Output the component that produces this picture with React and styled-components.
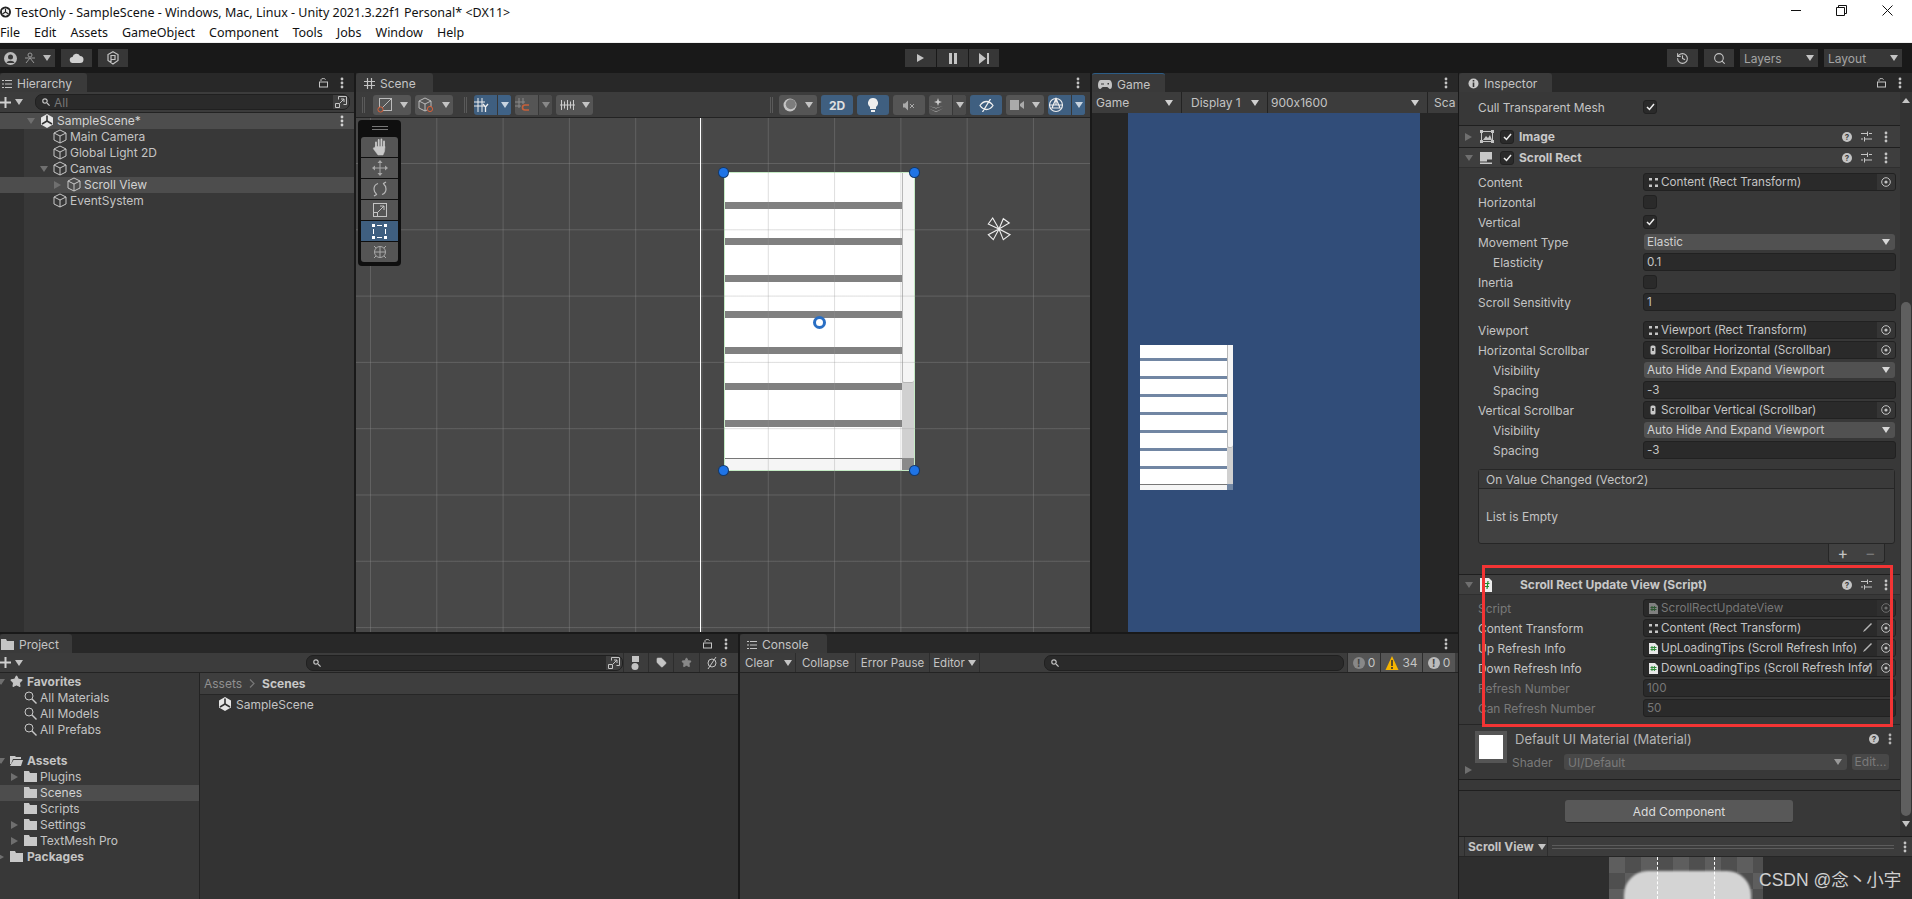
import React from "react";
import styled, { createGlobalStyle } from "styled-components";
import { History, Search, Star, Tag } from "lucide-react";

const GlobalStyle = createGlobalStyle`
  html, body {
    margin: 0;
    background: #191919;
  }
  * {
    box-sizing: border-box;
  }
`;

const StyledPage = styled.div`
  position: relative;
  width: 1912px;
  height: 899px;
  overflow: hidden;
  display: flex;
  flex-direction: column;
  background: #191919;
  color: #c4c4c4;
  font-family: Inter, "Liberation Sans", sans-serif;
  font-size: 12px;
  font-feature-settings: "calt" 0;
  white-space: nowrap;
`;

/* window chrome */
const StyledTitleBar = styled.div`
  height: 21px;
  background: #fff;
  color: #111;
  display: flex;
  align-items: center;
  font-family: "Noto Sans", sans-serif;
  font-size: 12.5px;
  padding-top: 3px;
`;

const StyledTitleIcon = styled.div`
  width: 11px;
  margin-right: 4px;
  display: flex;
  justify-content: flex-end;
  overflow: hidden;
`;

const StyledWindowButtons = styled.div`
  margin-left: auto;
  margin-top: -4px;
  display: flex;
  padding-right: 2px;
`;

const StyledWindowButton = styled.div`
  width: 45.5px;
  display: flex;
  justify-content: center;
`;

const StyledMenuBar = styled.div`
  height: 22px;
  padding-top: 1px;
  background: #fff;
  border-bottom: 1px solid #f0f0f0;
  color: #111;
  display: flex;
  align-items: center;
  gap: 14px;
  font-family: "Noto Sans", sans-serif;
  font-size: 12.5px;
`;

const StyledToolbar = styled.div`
  height: 30px;
  background: #191919;
  display: flex;
  align-items: flex-start;
  padding-top: 6px;
`;

const StyledToolbarLeft = styled.div`
  width: 905px;
  display: flex;
  gap: 6px;
`;

const StyledToolbarRight = styled.div`
  margin-left: auto;
  margin-right: 10px;
  display: flex;
  gap: 6px;
`;

const StyledPlayGroup = styled.div`
  display: flex;
  gap: 1px;
`;

const StyledTopButton = styled.div`
  width: ${props => props.$w}px;
  height: 18px;
  background: #373737;
  color: #a4a4a4;
  display: flex;
  align-items: center;
  justify-content: ${props => props.$spread ? "space-between" : "center"};
  padding: ${props => props.$spread ? "0 4px" : "0"};
`;

/* workspace */
const StyledWorkspace = styled.div`
  flex: 1;
  min-height: 0;
  display: flex;
`;

const StyledDockColumn = styled.div`
  width: 1458px;
  display: flex;
  flex-direction: column;
  gap: 2px;
`;

const StyledDockRow = styled.div`
  display: flex;
  gap: ${props => props.$gap}px;
  height: ${props => props.$h}px;
`;

const StyledPanel = styled.div`
  width: ${props => props.$w}px;
  display: flex;
  flex-direction: column;
  background: #383838;
  min-width: 0;
`;

const StyledTabStrip = styled.div`
  height: 19px;
  background: #282828;
  display: flex;
  align-items: stretch;
  flex-shrink: 0;
`;

const StyledTab = styled.div`
  width: ${props => props.$w}px;
  background: #3a3a3a;
  color: #c4c4c4;
  display: flex;
  align-items: center;
  gap: 5px;
  padding-left: ${props => props.$pad}px;
  padding-top: 2px;
  border-radius: 3px 3px 0 0;
  border-top: ${props => props.$focus ? "1px solid #2c5d87" : "none"};
`;

const StyledTabTools = styled.div`
  margin-left: auto;
  display: flex;
  align-items: center;
  gap: 12px;
  padding-right: 10px;
  color: #c4c4c4;
`;

const StyledSubBar = styled.div`
  height: ${props => props.$h}px;
  background: #3c3c3c;
  border-bottom: 1px solid #232323;
  display: flex;
  align-items: ${props => props.$top ? "flex-start" : "center"};
  padding-top: ${props => props.$top ? "3px" : "0"};
  flex-shrink: 0;
`;

const StyledSearchField = styled.div`
  width: ${props => props.$w}px;
  margin-left: ${props => props.$ml}px;
  height: 16px;
  background: #2a2a2a;
  border: 1px solid #202020;
  border-radius: 7px;
  display: flex;
  align-items: center;
  padding-left: 6px;
  gap: 4px;
  color: #777;
  font-size: 12px;
  overflow: hidden;
`;

const StyledSearchEnd = styled.div`
  margin-left: auto;
  width: 16px;
  height: 100%;
  background: #3e3e3e;
  color: #c4c4c4;
  display: flex;
  align-items: center;
  justify-content: center;
`;

const StyledAddGroup = styled.div`
  display: flex;
  align-items: center;
  gap: 4px;
  color: #d0d0d0;
`;

const StyledTreeList = styled.div`
  flex: 1;
  padding-top: ${props => props.$pt}px;
  background: ${props => props.$gutter ?
    "linear-gradient(90deg, #303030 24px, #383838 24px)" :
    "#383838"};
`;

const StyledTreeRow = styled.div`
  height: 16px;
  padding-bottom: 1px;
  display: flex;
  align-items: center;
  background: ${props => props.$selected ? "#4d4d4d" : "transparent"};
  color: ${props => props.$selected ? "#d2d2d2" : "#c4c4c4"};
  font-weight: ${props => props.$bold ? 700 : 400};
`;

const StyledTreeIndent = styled.div`
  margin-left: ${props => props.$indent}px;
  width: 13px;
  display: flex;
  flex-shrink: 0;
`;

const StyledTreeIcon = styled.div`
  width: ${props => props.$w || 17}px;
  display: flex;
  flex-shrink: 0;
  color: #c8c8c8;
`;

const StyledSceneHeaderDots = styled.div`
  margin-left: auto;
  padding-right: 10px;
  display: flex;
`;

const StyledCaret = styled.span`
  display: block;
  flex-shrink: 0;
  width: 0;
  height: 0;
  border-style: solid;
  ${props => props.$dir === "right" ? `
    border-width: 4.5px 0 4.5px 7px;
    border-color: transparent transparent transparent ${props.$color || "#6f6f6f"};
  ` : `
    border-width: 6px 4px 0 4px;
    border-color: ${props.$color || "#6f6f6f"} transparent transparent transparent;
  `}
`;

/* scene */
const StyledSceneTools = styled.div`
  display: flex;
  align-items: center;
  width: 100%;
  padding-left: 6px;
`;

const StyledGrip = styled.div`
  width: 3px;
  height: 16px;
  border-left: 1px solid #5a5a5a;
  border-right: 1px solid #5a5a5a;
  margin: 0 ${props => props.$mr}px 0 ${props => props.$ml || 0}px;
`;

const StyledToolButton = styled.div`
  width: ${props => props.$w}px;
  margin-right: ${props => props.$mr === undefined ? 4 : props.$mr}px;
  height: 20px;
  border-radius: 3px;
  background: ${props => props.$on ? "#3f5f80" : "#555"};
  color: #e0e0e0;
  font-weight: 700;
  display: flex;
  align-items: center;
  justify-content: space-around;
  overflow: hidden;
  flex-shrink: 0;
`;

const StyledSplit = styled.div`
  align-self: stretch;
  width: ${props => props.$w}px;
  margin-left: auto;
  border-left: 1px solid #383838;
  background: ${props => props.$on ? "#3f6286" : "#4c4c4c"};
  display: flex;
  align-items: center;
  justify-content: center;
`;

const StyledSceneView = styled.div`
  position: relative;
  flex: 1;
  background: #484848;
  overflow: hidden;
`;

const StyledSceneGrid = styled.div`
  position: absolute;
  inset: 0;
  background-image:
    linear-gradient(to right, rgba(150, 150, 150, 0.32) 1px, transparent 1px),
    linear-gradient(to bottom, rgba(150, 150, 150, 0.32) 1px, transparent 1px);
  background-size: 66.3px 66.3px;
  background-position: 14px 45px;
`;

const StyledAxisLine = styled.div`
  position: absolute;
  left: 344px;
  top: 0;
  bottom: 0;
  width: 1px;
  background: #fff;
`;

const StyledRectFrame = styled.div`
  position: absolute;
  left: 368px;
  top: 54px;
  width: 191px;
  height: 299px;
  border: 1px solid #c4eac4;
`;

const StyledMockList = styled.div`
  width: ${props => props.$w ? `${props.$w}px` : "100%"};
  height: ${props => props.$h ? `${props.$h}px` : "100%"};
  margin: ${props => props.$margin || "0"};
  display: grid;
  grid-template-columns: 1fr ${props => props.$bar}px;
  grid-template-rows: 1fr ${props => props.$bar}px;
  background: #fff;
`;

const StyledMockRows = styled.div`
  display: flex;
  flex-direction: column;
  gap: ${props => props.$gap}px;
  padding-top: ${props => props.$pad}px;
  overflow: hidden;
`;

const StyledMockRow = styled.div`
  height: ${props => props.$h}px;
  flex-shrink: 0;
  background: ${props => props.$color};
`;

const StyledMockVertical = styled.div`
  display: flex;
  flex-direction: column;
  background: #d0d0d0;
`;

const StyledMockHandle = styled.div`
  flex: 0 0 ${props => props.$h}px;
  background: #f5f5f5;
  border-radius: 0 0 2px 2px;
  box-shadow: inset 1px 0 0 #b8b8b8, inset 0 -1px 0 #b8b8b8;
`;

const StyledMockHorizontal = styled.div`
  background: #f5f5f5;
  border-top: 1px solid #777;
`;

const StyledMockCorner = styled.div`
  background: ${props => props.$color};
`;

const StyledHandle = styled.div`
  position: absolute;
  left: ${props => props.$x}px;
  top: ${props => props.$y}px;
  width: 9px;
  height: 9px;
  border-radius: 50%;
  background: #1f74e6;
  box-shadow: 0 0 0 1px #123a6e;
`;

const StyledPivot = styled.div`
  position: absolute;
  left: 457px;
  top: 198px;
  width: 13px;
  height: 13px;
  border-radius: 50%;
  background: #fff;
  border: 3.5px solid #2a6fc4;
`;

const StyledGizmoMark = styled.div`
  position: absolute;
  left: 630px;
  top: 98px;
  display: flex;
`;

const StyledToolOverlay = styled.div`
  position: absolute;
  left: 2px;
  top: 2px;
  width: 43px;
  height: 146px;
  background: #0f0f0f;
  border-radius: 4px;
  padding: 17px 3px 0;
  display: flex;
  flex-direction: column;
  gap: 1px;
`;

const StyledOverlayGrip = styled.div`
  position: absolute;
  left: 14px;
  top: 6px;
  width: 16px;
  height: 4px;
  border-top: 1px solid #777;
  border-bottom: 1px solid #777;
`;

const StyledOverlayTool = styled.div`
  height: 20px;
  background: ${props => props.$on ? "#3f5f80" : "#555"};
  color: #c8c8c8;
  display: flex;
  align-items: center;
  justify-content: center;
  border-radius: ${props => props.$edge === "top" ? "3px 3px 0 0" : props.$edge === "bottom" ? "0 0 3px 3px" : "0"};
`;

/* game */
const StyledGameTools = styled.div`
  height: 21px;
  display: flex;
  gap: 1px;
  background: #232323;
  flex-shrink: 0;
`;

const StyledGameDropdown = styled.div`
  width: ${props => props.$w}px;
  padding: 0 ${props => props.$pr === undefined ? 8 : props.$pr}px 0 ${props => props.$pl}px;
  background: #3c3c3c;
  display: flex;
  align-items: center;
  justify-content: space-between;
  overflow: hidden;
`;

const StyledGameView = styled.div`
  flex: 1;
  min-height: 0;
  background: #262626;
  display: flex;
  justify-content: center;
`;

const StyledGameSurface = styled.div`
  width: 292px;
  margin-right: 2px;
  background: #314d79;
  overflow: hidden;
`;

/* project and console */
const StyledProjectBody = styled.div`
  flex: 1;
  display: flex;
  min-height: 0;
`;

const StyledProjectTree = styled.div`
  width: 200px;
  border-right: 1px solid #232323;
  background: #383838;
  padding-top: 1px;
`;

const StyledTreeGap = styled.div`
  height: 15px;
`;

const StyledProjectFiles = styled.div`
  flex: 1;
  background: #333;
`;

const StyledBreadcrumb = styled.div`
  height: 22px;
  background: #3e3e3e;
  border-bottom: 1px solid #262626;
  display: flex;
  align-items: center;
  gap: 7px;
  padding-left: 4px;
  color: #909090;
`;

const StyledCrumbCurrent = styled.span`
  color: #c8c8c8;
  font-weight: 700;
`;

const StyledFileRow = styled.div`
  display: flex;
  align-items: center;
  gap: 4px;
  padding: 0 0 2px 18px;
  height: 20px;
`;

const StyledFilterButton = styled.div`
  width: ${props => props.$w}px;
  align-self: stretch;
  border-left: 1px solid #2d2d2d;
  display: flex;
  align-items: center;
  justify-content: center;
  gap: 2px;
  color: #c4c4c4;
  &:first-of-type {
    margin-left: 5px;
  }
`;

const StyledConsoleButton = styled.div`
  width: ${props => props.$w}px;
  align-self: stretch;
  border-right: 1px solid #2d2d2d;
  display: flex;
  align-items: center;
  justify-content: ${props => props.$between ? "space-between" : "center"};
  padding: ${props => props.$between ? "0 3px 0 5px" : "0"};
  gap: 3px;
  font-size: 11.5px;
`;

const StyledCountButton = styled.div`
  width: ${props => props.$w}px;
  margin-left: ${props => props.$ml || 0}px;
  align-self: stretch;
  background: #555;
  border-left: 1px solid #2d2d2d;
  display: flex;
  align-items: center;
  justify-content: center;
  gap: 3px;
`;

const StyledCountBadge = styled.span`
  width: 12px;
  height: 12px;
  border-radius: 50%;
  background: ${props => props.$color};
  color: #444;
  font-size: 10px;
  font-weight: 700;
  line-height: 12px;
  text-align: center;
`;

/* inspector */
const StyledInspector = styled.div`
  position: relative;
  margin-left: 1px;
  flex: 1;
  display: flex;
  flex-direction: column;
  background: #383838;
`;

const StyledInspectorMain = styled.div`
  flex: 1;
  min-height: 0;
  display: flex;
`;

const StyledInspectorBody = styled.div`
  width: 441px;
  padding-top: 5px;
`;

const StyledScrollColumn = styled.div`
  flex: 1;
  display: flex;
  flex-direction: column;
  align-items: center;
  padding-top: 6px;
  background: #333;
`;

const StyledScrollThumb = styled.div`
  width: 10px;
  height: 514px;
  margin: 199px 0 5px;
  border-radius: 5px;
  background: #5f5f5f;
`;

const StyledUpCaret = styled.span`
  width: 0;
  height: 0;
  border-style: solid;
  border-width: 0 4px 5px 4px;
  border-color: transparent transparent #c4c4c4 transparent;
`;

const StyledRow = styled.div`
  height: 20px;
  display: grid;
  grid-template-columns: 165px 1fr;
  align-items: center;
  padding: 0 4px 0 19px;
  margin-top: ${props => props.$mt || 0}px;
`;

const StyledRowLabel = styled.div`
  padding-left: ${props => props.$indent ? 15 : 0}px;
  font-size: 11.9px;
  color: ${props => props.$disabled ? "#7a7a7a" : "#c4c4c4"};
`;

const StyledCheckbox = styled.div`
  width: 14px;
  height: 14px;
  background: #2a2a2a;
  border: 1px solid #212121;
  border-radius: 3px;
  display: flex;
  align-items: center;
  justify-content: center;
  color: #eee;
`;

const StyledField = styled.div`
  position: relative;
  height: 18px;
  background: #2a2a2a;
  border: 1px solid #212121;
  border-radius: 3px;
  display: flex;
  align-items: center;
  padding-left: ${props => props.$pl || 3}px;
  gap: 3px;
  font-size: 11.7px;
  color: ${props => props.$disabled ? "#777" : "#c4c4c4"};
  overflow: hidden;
  svg {
    flex-shrink: 0;
  }
`;

const StyledFieldPicker = styled.div`
  position: absolute;
  right: 0;
  top: 0;
  width: 18px;
  height: 100%;
  background: #353535;
  display: flex;
  align-items: center;
  justify-content: center;
  opacity: ${props => props.$disabled ? 0.45 : 1};
`;

const StyledFieldPencil = styled.div`
  position: absolute;
  right: 22px;
  top: 2px;
  display: flex;
  color: #b5b5b5;
`;

const StyledDropdown = styled.div`
  height: 16px;
  margin: 0 1px;
  background: #515151;
  border-radius: 3px;
  display: flex;
  align-items: center;
  justify-content: space-between;
  padding: 0 5px 0 3px;
  font-size: 11.7px;
  color: #d0d0d0;
`;

const StyledComponentHeader = styled.div`
  height: ${props => props.$h || 21}px;
  background: #3e3e3e;
  border-top: 1px solid #1f1f1f;
  border-bottom: ${props => props.$soft ? "1px solid #2f2f2f" : "none"};
  display: flex;
  align-items: center;
  padding: 0 12px 0 6px;
  margin-top: ${props => props.$mt || 0}px;
  margin-bottom: ${props => props.$mb || 0}px;
`;

const StyledHeaderCaret = styled.div`
  width: 15px;
  display: flex;
  flex-shrink: 0;
`;

const StyledHeaderIcon = styled.div`
  width: ${props => props.$w}px;
  display: flex;
  flex-shrink: 0;
`;

const StyledHeaderTitle = styled.div`
  margin-left: 5px;
  font-weight: 700;
  color: #c8c8c8;
`;

const StyledHeaderTools = styled.div`
  margin-left: auto;
  display: flex;
  align-items: center;
  gap: 9px;
  svg:last-child {
    margin-left: 3px;
  }
`;

const StyledHelpIcon = styled.div`
  width: 10px;
  height: 10px;
  border-radius: 50%;
  background: #c4c4c4;
  color: #3e3e3e;
  font-size: 8px;
  font-weight: 700;
  line-height: 10px;
  text-align: center;
`;

const StyledEventBox = styled.div`
  margin: 9px 5px 0 19px;
  border: 1px solid #262626;
  border-radius: 3px;
  height: 75px;
  background: #414141;
`;

const StyledEventHead = styled.div`
  height: 19px;
  background: #3a3a3a;
  border-bottom: 1px solid #262626;
  padding-left: 7px;
  display: flex;
  align-items: center;
`;

const StyledEventBody = styled.div`
  height: 54px;
  padding-left: 7px;
  display: flex;
  align-items: center;
`;

const StyledEventFooter = styled.div`
  width: 57px;
  height: 19px;
  margin: 0 15px 11px auto;
  background: #414141;
  border: 1px solid #262626;
  border-top: none;
  border-radius: 0 0 3px 3px;
  display: flex;
  align-items: center;
  justify-content: space-around;
  font-size: 16px;
  line-height: 16px;
`;

const StyledMinus = styled.span`
  color: #777;
`;

const StyledMaterialCard = styled.div`
  height: 56px;
  margin-top: 6px;
  border-top: 1px solid #262626;
  border-bottom: 1px solid #1f1f1f;
  display: grid;
  grid-template-columns: 16px 32px 1fr;
`;

const StyledMaterialCaret = styled.div`
  margin: 0 0 5px 6px;
  align-self: end;
`;

const StyledMaterialSwatch = styled.div`
  width: 32px;
  height: 32px;
  margin-top: 6px;
  background: #555;
  padding: 4px;
`;

const StyledMaterialWhite = styled.div`
  width: 24px;
  height: 24px;
  background: #fff;
`;

const StyledMaterialMain = styled.div`
  padding: 4px 6px 0 5px;
`;

const StyledMaterialTitle = styled.div`
  height: 20px;
  display: flex;
  align-items: center;
  padding: 0 0 0 3px;
  font-size: 13px;
  color: #b4b4b4;
`;

const StyledMaterialTools = styled.div`
  margin-left: auto;
  margin-right: 2px;
  display: flex;
  gap: 9px;
  align-items: center;
`;

const StyledShaderRow = styled.div`
  margin-top: 5px;
  display: grid;
  grid-template-columns: 52px 283px 42px;
  gap: 0;
  align-items: center;
  color: #7a7a7a;
`;

const StyledShaderSelect = styled.div`
  height: 16px;
  background: #484848;
  border-radius: 3px;
  padding: 0 5px 0 4px;
  display: flex;
  align-items: center;
  justify-content: space-between;
`;

const StyledEditButton = styled.div`
  margin-left: 5px;
  height: 16px;
  background: #484848;
  border-radius: 3px;
  text-align: center;
  line-height: 16px;
`;

const StyledThinRule = styled.div`
  height: 1px;
  margin-top: 10px;
  background: #1f1f1f;
`;

const StyledAddButton = styled.div`
  width: 228px;
  height: 23px;
  margin: 9px 0 0 106px;
  background: #585858;
  border-bottom: 1px solid #2a2a2a;
  border-radius: 3px;
  color: #ddd;
  display: flex;
  align-items: center;
  justify-content: center;
`;

const StyledPreviewBar = styled.div`
  height: 21px;
  background: #3c3c3c;
  border-top: 1px solid #1f1f1f;
  border-bottom: 1px solid #262626;
  display: flex;
  align-items: center;
  flex-shrink: 0;
`;

const StyledPreviewSelect = styled.div`
  width: 84px;
  margin-left: 5px;
  height: 100%;
  border-left: 1px solid #2d2d2d;
  border-right: 1px solid #2d2d2d;
  display: flex;
  align-items: center;
  gap: 4px;
  padding-left: 3px;
  font-weight: 700;
`;

const StyledDragLines = styled.div`
  margin-left: 4px;
  width: 342px;
  height: 4px;
  border-top: 1px solid #5c5c5c;
  border-bottom: 1px solid #5c5c5c;
`;

const StyledPreviewDots = styled.div`
  margin-left: 9px;
  display: flex;
`;

const StyledPreviewStage = styled.div`
  height: 42px;
  flex-shrink: 0;
  background: #2e2e2e;
  display: flex;
  justify-content: center;
  overflow: hidden;
`;

const StyledChecker = styled.div`
  position: relative;
  width: 154px;
  background: repeating-conic-gradient(#4f4f4f 0 25%, #5e5e5e 0 50%) 0 0 / 32px 32px;
  overflow: hidden;
`;

const StyledSpriteBlob = styled.div`
  position: absolute;
  left: 15px;
  top: 14px;
  width: 127px;
  height: 120px;
  background: #d4d4d4;
  border-radius: 24px;
  filter: blur(1px);
`;

const StyledSliceLine = styled.div`
  position: absolute;
  left: ${props => props.$x}px;
  top: 0;
  bottom: 0;
  border-left: 1px dashed #fff;
`;

const StyledRedBox = styled.div`
  position: absolute;
  left: 23px;
  top: 492px;
  width: 411px;
  height: 162px;
  border: 3px solid #f33434;
  pointer-events: none;
`;

const StyledWatermark = styled.div`
  position: absolute;
  left: 1759px;
  top: 868px;
  color: #d0d0d0;
  font-family: "Liberation Sans", "Noto Sans CJK SC", sans-serif;
  font-size: 17.5px;
  line-height: 24px;
`;

/* drawn icons */
const Dots = () => (
  <svg width="4" height="12" viewBox="0 0 4 12" fill="currentColor">
    <circle cx="2" cy="2" r="1.4" /><circle cx="2" cy="6" r="1.4" /><circle cx="2" cy="10" r="1.4" />
  </svg>
);

const LockIcon = () => (
  <svg width="9" height="11" viewBox="0 0 9 11" fill="none" stroke="currentColor">
    <path d="M2 4V2.6C2 1.2 6.5 1.2 6.5 2.6" /><rect x="0.5" y="5" width="8" height="5" />
  </svg>
);

const CubeIcon = () => (
  <svg width="14" height="15" viewBox="0 0 14 15" fill="none" stroke="currentColor" strokeWidth="1">
    <path d="M7 1 13 4v7l-6 3-6-3V4zM1 4l6 3 6-3M7 7v7" />
  </svg>
);

const UnityIcon = () => (
  <svg width="14" height="14" viewBox="0 0 14 14">
    <path d="M7 0 13 3.5v7L7 14 1 10.5v-7z" fill="#e6e6e6" />
    <path d="M7 7V1.5M7 7 2 10M7 7l5 3" stroke="#333" strokeWidth="1.6" />
  </svg>
);

const FolderIcon = ({ open }) => (
  <svg width="13" height="11" viewBox="0 0 13 11" fill="currentColor">
    {open ?
      <path d="M0 1h5l1 1h5v2H3L1 9 0 9zM3.5 5H13l-2 6H0z" /> :
      <path d="M0 0h5l1 2h7v9H0z" />}
  </svg>
);

const LensIcon = () => (
  <svg width="13" height="13" viewBox="0 0 13 13" fill="none" stroke="currentColor">
    <circle cx="5" cy="5" r="4" /><path d="m8 8 4.5 4.5" strokeWidth="1.4" />
  </svg>
);

const SmallLens = () => (
  <svg width="8" height="8" viewBox="0 0 8 8" fill="none" stroke="#c4c4c4" strokeWidth="1.2">
    <circle cx="3" cy="3" r="2.2" /><path d="m5 5 2.6 2.6" />
  </svg>
);

const ExpandIcon = () => (
  <svg width="12" height="12" viewBox="0 0 12 12" fill="none" stroke="currentColor">
    <path d="M3.5 3.5v-3h8v8h-3M.5 7.5h4v4h-4zM5 7l4-4M6 3h3v3" />
  </svg>
);

const ListIcon = () => (
  <svg width="10" height="10" viewBox="0 0 10 10" fill="currentColor">
    <path d="M0 1h2v1H0zM3 1h7v1H3zM0 4.5h2v1H0zM3 4.5h7v1H3zM0 8h2v1H0zM3 8h7v1H3z" />
  </svg>
);

const HashIcon = () => (
  <svg width="11" height="11" viewBox="0 0 11 11" fill="none" stroke="currentColor" strokeWidth="1.2">
    <path d="M3.5 0v11M7.5 0v11M0 3.5h11M0 7.5h11" />
  </svg>
);

const GamepadIcon = () => (
  <svg width="14" height="9" viewBox="0 0 14 9" fill="currentColor">
    <path d="M3 0h8c2 0 3 2 3 5s-1 4-2 4-2-2-3-2H5C4 7 3 9 2 9S0 8 0 5s1-5 3-5z" />
    <path d="M3 3.5h3v1H3zM9.5 3h1.5v1.5H9.5z" fill="#383838" />
  </svg>
);

const InfoIcon = () => (
  <svg width="11" height="11" viewBox="0 0 11 11">
    <circle cx="5.5" cy="5.5" r="5" fill="#c8c8c8" />
    <path d="M4.7 2h1.6v1.5H4.7zM4.7 4.5h1.6V9H4.7z" fill="#333" />
  </svg>
);

const CheckMark = () => (
  <svg width="9" height="8" viewBox="0 0 9 8" fill="none" stroke="currentColor" strokeWidth="1.5">
    <path d="m1 4 2.5 2.5L8 1" />
  </svg>
);

const SlidersIcon = () => (
  <svg width="11" height="11" viewBox="0 0 11 11" fill="#c4c4c4">
    <path d="M0 2h6v1H0zM8 2h3v1H8zM6 .5h1V5H6zM0 7.5h2v1H0zM4 7.5h7v1H4zM3 6h1v4.5H3z" />
  </svg>
);

const TargetIcon = () => (
  <svg width="10" height="10" viewBox="0 0 10 10" fill="none" stroke="#c4c4c4">
    <circle cx="5" cy="5" r="4.3" /><circle cx="5" cy="5" r="1.6" fill="#c4c4c4" stroke="none" />
  </svg>
);

const RectDotsIcon = () => (
  <svg width="9" height="9" viewBox="0 0 9 9" fill="#c4c4c4">
    <path d="M0 0h3v2.5H0zM6 0h3v2.5H6zM0 6.5h3V9H0zM6 6.5h3V9H6z" />
  </svg>
);

const ScrollbarIcon = () => (
  <svg width="9" height="11" viewBox="0 0 9 11">
    <rect x="1.5" y="0.5" width="5" height="9" rx="1.6" fill="#c8c8c8" />
    <rect x="3" y="3" width="2" height="3" fill="#444" />
  </svg>
);

const ScriptIcon = ({ dim }) => (
  <svg width="9" height="11" viewBox="0 0 9 11" opacity={dim ? 0.45 : 1}>
    <path d="M0 0h6l3 3v8H0z" fill="#e8e8e8" />
    <path d="M3 3v5M5.4 3v5M1.5 4.5h6M1.5 6.5h6" stroke="#2f8c3a" strokeWidth="1" />
  </svg>
);

const LargeScriptIcon = () => (
  <svg width="13" height="14" viewBox="0 0 13 14">
    <path d="M0 0h9l3 3v11H0z" fill="#ececec" />
    <path d="M4.5 3 3.5 11M8 3l-1 8M2 5.5h7.5M2 8.5h7" stroke="#1f8a2b" strokeWidth="1.2" />
  </svg>
);

const PencilIcon = () => (
  <svg width="12" height="12" viewBox="0 0 12 12" fill="currentColor">
    <path d="M10 1l1 1-7 7-2 1 1-2z" />
  </svg>
);

const ImageIcon = () => (
  <svg width="14" height="13" viewBox="0 0 14 13" fill="none" stroke="#c4c4c4">
    <rect x="1.5" y="1.5" width="11" height="10" />
    <path d="M3 10 6 6l2 2 2-3 2 5z" fill="#c4c4c4" stroke="none" />
    <path d="M0 0h3v3H0zM11 0h3v3h-3zM0 10h3v3H0zM11 10h3v3h-3z" fill="#c4c4c4" stroke="none" />
  </svg>
);

const ScrollRectIcon = () => (
  <svg width="12" height="12" viewBox="0 0 12 12" fill="#c8c8c8">
    <path d="M0 0h12v7.500H7V9.500H0zM0 10.500h12V12H0z" />
  </svg>
);

const HandToolIcon = () => (
  <svg width="16" height="18" viewBox="0 0 16 18" fill="#c8c8c8" stroke="#c8c8c8" strokeLinecap="round">
    <path d="M4 9V4.500M6.700 8V2M9.400 8V1.500M12 9V3.500" strokeWidth="1.800" fill="none" />
    <path d="M3.500 8.500h9.500l-.5 5-1.500 3.500H6l-4.500-6c-.5-1 .5-2 1.500-1z" strokeWidth="0.500" />
  </svg>
);

const MoveToolIcon = () => (
  <svg width="16" height="16" viewBox="0 0 16 16" fill="#a8a8a8">
    <path d="M8 0l2.5 3h-5zM8 16l-2.5-3h5zM0 8l3-2.5v5zM16 8l-3 2.5v-5zM7.5 3h1v10h-1zM3 7.5h10v1H3z" />
  </svg>
);

const RotateToolIcon = () => (
  <svg width="14" height="16" viewBox="0 0 14 16" fill="none" stroke="#b8b8b8" strokeWidth="1.2">
    <path d="M5 2.5C2 3.5 1 6 1 8c0 2 1 4 2.5 5M9 13.5c3-1 4-3.500 4-5.500s-1-4-2.500-5M2 11l1.500 2.500L1 15M12 5l-1.500-2.500L13 1" />
  </svg>
);

const ScaleToolIcon = () => (
  <svg width="14" height="14" viewBox="0 0 14 14" fill="none" stroke="#c4c4c4">
    <rect x="0.5" y="0.5" width="13" height="13" /><rect x="0.5" y="9.500" width="4" height="4" />
    <path d="M5 9l6-6M7 3h4v4" />
  </svg>
);

const RectToolIcon = () => (
  <svg width="15" height="15" viewBox="0 0 15 15" fill="#fff">
    <path d="M0 0h3v3H0zM12 0h3v3h-3zM0 12h3v3H0zM12 12h3v3h-3zM5 1h5v1H5zM5 13h5v1H5zM1 5h1v5H1zM13 5h1v5h-1z" />
  </svg>
);

const TransformToolIcon = () => (
  <svg width="16" height="16" viewBox="0 0 16 16" fill="none" stroke="#aaa">
    <circle cx="8" cy="8" r="5.500" /><path d="M8 3v10M3 8h10M2 2l2 2M14 14l-2-2M14 2l-2 2M2 14l2-2" />
  </svg>
);

const RectSnapIcon = () => (
  <svg width="16" height="16" viewBox="0 0 16 16" fill="none">
    <rect x="2.500" y="1.500" width="12" height="12" stroke="#bbb" />
    <path d="M2.500 13.500l12-12" stroke="#bbb" />
    <circle cx="3.500" cy="12.500" r="2.600" stroke="#d8603a" fill="#555" />
  </svg>
);

const CubeSnapIcon = () => (
  <svg width="17" height="16" viewBox="0 0 17 16" fill="none">
    <path d="M7 1l6 3v7l-6 3-6-3V4zM1 4l6 3 6-3M7 7v7" stroke="#bbb" />
    <circle cx="12" cy="12" r="2.600" stroke="#d8603a" fill="#555" />
  </svg>
);

const GridSnapIcon = () => (
  <svg width="15" height="14" viewBox="0 0 15 14" fill="none" stroke="#eee">
    <path d="M4 0v14M8 0v14M0 4h11M0 8h11" />
    <path d="M9 6l2.500 3L14 6M11.500 9v5" strokeWidth="1.300" />
  </svg>
);

const GridMagnetIcon = () => (
  <svg width="15" height="14" viewBox="0 0 15 14" fill="none">
    <path d="M4 0v10M8 0v6M0 4h10M0 8h6" stroke="#8a8a8a" />
    <path d="M14 7H10a2.500 2.500 0 0 0 0 5h4" stroke="#c8603a" strokeWidth="1.600" />
  </svg>
);

const RulerIcon = () => (
  <svg width="15" height="12" viewBox="0 0 15 12" fill="none" stroke="#ccc">
    <path d="M0 6h15M1.500 1v10M4.500 2.500v7M7.500 1v10M10.500 2.500v7M13.500 1v10" />
  </svg>
);

const ShadeIcon = () => (
  <svg width="14" height="14" viewBox="0 0 14 14">
    <circle cx="7" cy="7" r="6.500" fill="#c4c4c4" /><circle cx="7.800" cy="6.200" r="5" fill="#7d7d7d" />
  </svg>
);

const BulbIcon = () => (
  <svg width="10" height="14" viewBox="0 0 10 14" fill="#eee">
    <path d="M5 0a5 5 0 0 1 3 9v2H2V9a5 5 0 0 1 3-9zM3 12h4v2H3z" />
  </svg>
);

const MuteIcon = () => (
  <svg width="12" height="11" viewBox="0 0 12 11" fill="#aaa">
    <path d="M0 3.500h2l3-3v10l-3-3H0z" /><path d="M7 4l4 4M11 4l-4 4" stroke="#aaa" fill="none" />
  </svg>
);

const FxIcon = () => (
  <svg width="14" height="14" viewBox="0 0 14 14" fill="#ccc">
    <path d="M9 0l1 3 3 1-3 1-1 3-1-3-3-1 3-1zM0 8l7 2 7-2-7 2.500zM0 10.500l7 3 7-3-7 3.500z" />
  </svg>
);

const HiddenIcon = () => (
  <svg width="15" height="13" viewBox="0 0 15 13" fill="none" stroke="#eee" strokeWidth="1.300">
    <path d="M1 6.500C3 3.500 5 2.500 7.500 2.500s4.500 1 6.500 4c-2 3-4 4-6.500 4s-4.500-1-6.500-4zM11.500 0l-8 13" />
  </svg>
);

const CameraIcon = () => (
  <svg width="14" height="10" viewBox="0 0 14 10" fill="#aaa">
    <rect width="9" height="10" /><path d="M10 4l4-3v8l-4-3z" />
  </svg>
);

const GizmoIcon = () => (
  <svg width="16" height="16" viewBox="0 0 16 16" fill="none" stroke="#eee" strokeWidth="1.200">
    <circle cx="8" cy="8" r="6.500" /><path d="M8 1.500 4 11h8zM8 1.500V8M2 8h12" />
  </svg>
);

const LayersFilterIcon = () => (
  <svg width="10" height="14" viewBox="0 0 10 14" fill="#c4c4c4">
    <path d="M1 0h7v6H1z" /><circle cx="4" cy="10.500" r="3.500" />
  </svg>
);

const HiddenSmallIcon = () => (
  <svg width="12" height="12" viewBox="0 0 12 12" fill="none" stroke="#c4c4c4">
    <circle cx="6" cy="6" r="4" /><path d="M10 0 2 12" />
  </svg>
);

const WarnIcon = () => (
  <svg width="14" height="14" viewBox="0 0 14 14">
    <path d="M7 0l6.500 14H.5z" fill="#f5b400" />
    <path d="M6.200 4h1.600v6H6.200zM6.200 11h1.600v2H6.200z" fill="#333" />
  </svg>
);

const GizmoKites = () => (
  <svg width="26" height="26" viewBox="0 0 26 26" fill="none" stroke="#eee" strokeWidth="1.100">
    <path d="M13 13 6.700 2 2.300 8zM13 13 17.300 2.700 23.300 7zM13 13 2.300 18.700 7.300 23.700zM13 13 17.300 23.700 24 18.700z" />
  </svg>
);

const TREE_ROWS = [
  { name: "Main Camera", indent: 40 },
  { name: "Global Light 2D", indent: 40 },
  { name: "Canvas", indent: 40, caret: "down" },
  { name: "Scroll View", indent: 54, caret: "right", selected: true },
  { name: "EventSystem", indent: 40 },
];

const MOCK_ROWS = [0, 1, 2, 3, 4, 5, 6];

const Caret = ({ dir = "down", color }) => <StyledCaret $dir={dir} $color={color} />;

const MockList = ({ barHeight, gap, pad, bar, handle, rowColor, cornerColor, ...rest }) => (
  <StyledMockList $bar={bar} {...rest}>
    <StyledMockRows $gap={gap} $pad={pad}>
      {MOCK_ROWS.map((row) => <StyledMockRow key={row} $h={barHeight} $color={rowColor} />)}
    </StyledMockRows>
    <StyledMockVertical>
      <StyledMockHandle $h={handle} />
    </StyledMockVertical>
    <StyledMockHorizontal />
    <StyledMockCorner $color={cornerColor} />
  </StyledMockList>
);

const PanelTabs = ({ width, pad, focus, icon, label, tools }) => (
  <StyledTabStrip>
    <StyledTab $w={width} $pad={pad} $focus={focus}>
      {icon}
      {label}
    </StyledTab>
    <StyledTabTools>{tools}</StyledTabTools>
  </StyledTabStrip>
);

const CheckRow = ({ label, checked }) => (
  <StyledRow>
    <StyledRowLabel>{label}</StyledRowLabel>
    <StyledCheckbox>{checked && <CheckMark />}</StyledCheckbox>
  </StyledRow>
);

const ObjectRow = ({ label, icon, value, pencil, disabled, mt }) => (
  <StyledRow $mt={mt}>
    <StyledRowLabel $disabled={disabled}>{label}</StyledRowLabel>
    <StyledField $disabled={disabled} $pl={5}>
      {icon}
      {value}
      {pencil && <StyledFieldPencil><PencilIcon /></StyledFieldPencil>}
      <StyledFieldPicker $disabled={disabled}><TargetIcon /></StyledFieldPicker>
    </StyledField>
  </StyledRow>
);

const SelectRow = ({ label, value, indent }) => (
  <StyledRow>
    <StyledRowLabel $indent={indent}>{label}</StyledRowLabel>
    <StyledDropdown>{value}<Caret color="#d8d8d8" /></StyledDropdown>
  </StyledRow>
);

const ValueRow = ({ label, value, indent, disabled }) => (
  <StyledRow>
    <StyledRowLabel $indent={indent} $disabled={disabled}>{label}</StyledRowLabel>
    <StyledField $disabled={disabled}>{value}</StyledField>
  </StyledRow>
);

const ComponentTools = () => (
  <StyledHeaderTools>
    <StyledHelpIcon>?</StyledHelpIcon>
    <SlidersIcon />
    <Dots />
  </StyledHeaderTools>
);

const PlusIcon = () => (
  <svg width="11" height="11" viewBox="0 0 11 11" fill="currentColor"><path d="M4.500 0h2v11h-2zM0 4.500h11v2H0z" /></svg>
);

const Hierarchy = () => (
  <StyledPanel $w={354}>
    <PanelTabs
      width={87}
      pad={2}
      icon={<ListIcon />}
      label="Hierarchy"
      tools={<><LockIcon /><Dots /></>}
    />
    <StyledSubBar $h={21}>
      <StyledAddGroup>
        <PlusIcon />
        <Caret color="#c4c4c4" />
      </StyledAddGroup>
      <StyledSearchField $w={315} $ml={12}>
        <SmallLens />
        All
        <StyledSearchEnd><ExpandIcon /></StyledSearchEnd>
      </StyledSearchField>
    </StyledSubBar>
    <StyledTreeList $gutter>
      <StyledTreeRow $selected>
        <StyledTreeIndent $indent={27}><Caret /></StyledTreeIndent>
        <StyledTreeIcon><UnityIcon /></StyledTreeIcon>
        SampleScene*
        <StyledSceneHeaderDots><Dots /></StyledSceneHeaderDots>
      </StyledTreeRow>
      {TREE_ROWS.map((row) => (
        <StyledTreeRow key={row.name} $selected={row.selected}>
          <StyledTreeIndent $indent={row.indent}>
            {row.caret && <Caret dir={row.caret} />}
          </StyledTreeIndent>
          <StyledTreeIcon><CubeIcon /></StyledTreeIcon>
          {row.name}
        </StyledTreeRow>
      ))}
    </StyledTreeList>
  </StyledPanel>
);

const Scene = () => (
  <StyledPanel $w={734}>
    <PanelTabs width={77} pad={8} icon={<HashIcon />} label="Scene" tools={<Dots />} />
    <StyledSubBar $h={26} $top>
      <StyledSceneTools>
        <StyledGrip $mr={8} />
        <StyledToolButton $w={38}><RectSnapIcon /><Caret color="#c4c4c4" /></StyledToolButton>
        <StyledToolButton $w={38} $mr={0}><CubeSnapIcon /><Caret color="#c4c4c4" /></StyledToolButton>
        <StyledGrip $ml={11} $mr={7} />
        <StyledToolButton $w={37} $on>
          <GridSnapIcon />
          <StyledSplit $w={14} $on><Caret color="#c8d4e0" /></StyledSplit>
        </StyledToolButton>
        <StyledToolButton $w={37}>
          <GridMagnetIcon />
          <StyledSplit $w={14}><Caret color="#888" /></StyledSplit>
        </StyledToolButton>
        <StyledToolButton $w={37}><RulerIcon /><Caret color="#c4c4c4" /></StyledToolButton>
        <StyledGrip $ml={173} $mr={6} />
        <StyledToolButton $w={38}><ShadeIcon /><Caret color="#c4c4c4" /></StyledToolButton>
        <StyledToolButton $w={32} $on>2D</StyledToolButton>
        <StyledToolButton $w={32} $on><BulbIcon /></StyledToolButton>
        <StyledToolButton $w={32}><MuteIcon /></StyledToolButton>
        <StyledToolButton $w={37}>
          <FxIcon />
          <StyledSplit $w={14}><Caret color="#c4c4c4" /></StyledSplit>
        </StyledToolButton>
        <StyledToolButton $w={32} $on><HiddenIcon /></StyledToolButton>
        <StyledToolButton $w={38}><CameraIcon /><Caret color="#c4c4c4" /></StyledToolButton>
        <StyledToolButton $w={37} $on $mr={0}>
          <GizmoIcon />
          <StyledSplit $w={14} $on><Caret color="#c8d4e0" /></StyledSplit>
        </StyledToolButton>
      </StyledSceneTools>
    </StyledSubBar>
    <StyledSceneView>
      <StyledRectFrame>
        <MockList
          barHeight={7}
          gap={29.3}
          pad={29}
          bar={12}
          handle={210}
          rowColor="#808080"
          cornerColor="#8a8a8a"
        />
      </StyledRectFrame>
      <StyledSceneGrid />
      <StyledAxisLine />
      <StyledHandle $x={363} $y={50} />
      <StyledHandle $x={554} $y={50} />
      <StyledHandle $x={363} $y={348} />
      <StyledHandle $x={554} $y={348} />
      <StyledPivot />
      <StyledGizmoMark><GizmoKites /></StyledGizmoMark>
      <StyledToolOverlay>
        <StyledOverlayGrip />
        <StyledOverlayTool $edge="top"><HandToolIcon /></StyledOverlayTool>
        <StyledOverlayTool><MoveToolIcon /></StyledOverlayTool>
        <StyledOverlayTool><RotateToolIcon /></StyledOverlayTool>
        <StyledOverlayTool><ScaleToolIcon /></StyledOverlayTool>
        <StyledOverlayTool $on><RectToolIcon /></StyledOverlayTool>
        <StyledOverlayTool $edge="bottom"><TransformToolIcon /></StyledOverlayTool>
      </StyledToolOverlay>
    </StyledSceneView>
  </StyledPanel>
);

const Game = () => (
  <StyledPanel $w={366}>
    <PanelTabs width={73} pad={6} focus icon={<GamepadIcon />} label="Game" tools={<Dots />} />
    <StyledGameTools>
      <StyledGameDropdown $w={89} $pl={4}>Game<Caret color="#d0d0d0" /></StyledGameDropdown>
      <StyledGameDropdown $w={85} $pl={9}>Display 1<Caret color="#d0d0d0" /></StyledGameDropdown>
      <StyledGameDropdown $w={159} $pl={3}>900x1600<Caret color="#d0d0d0" /></StyledGameDropdown>
      <StyledGameDropdown $w={30} $pl={6} $pr={0}>Sca</StyledGameDropdown>
    </StyledGameTools>
    <StyledGameView>
      <StyledGameSurface>
        <MockList
          $w={93}
          $h={145}
          $margin="232px 0 0 12px"
          barHeight={3}
          gap={15}
          pad={13}
          bar={6}
          handle={103}
          rowColor="#7186a3"
          cornerColor="#7186a3"
        />
      </StyledGameSurface>
    </StyledGameView>
  </StyledPanel>
);

const Project = () => (
  <StyledPanel $w={738}>
    <PanelTabs
      width={72}
      pad={1}
      icon={<FolderIcon />}
      label="Project"
      tools={<><LockIcon /><Dots /></>}
    />
    <StyledSubBar $h={20}>
      <StyledAddGroup>
        <PlusIcon />
        <Caret color="#c4c4c4" />
      </StyledAddGroup>
      <StyledSearchField $w={317} $ml={283}>
        <SmallLens />
        <StyledSearchEnd><ExpandIcon /></StyledSearchEnd>
      </StyledSearchField>
      <StyledFilterButton $w={25}><LayersFilterIcon /></StyledFilterButton>
      <StyledFilterButton $w={25}><Tag size={11} fill="#c4c4c4" strokeWidth={1} /></StyledFilterButton>
      <StyledFilterButton $w={26}><Star size={11} fill="#888" color="#888" /></StyledFilterButton>
      <StyledFilterButton $w={34}><HiddenSmallIcon />8</StyledFilterButton>
    </StyledSubBar>
    <StyledProjectBody>
      <StyledProjectTree>
        <StyledTreeRow $bold>
          <StyledTreeIndent $indent={-3}><Caret /></StyledTreeIndent>
          <StyledTreeIcon><Star size={13} fill="#c4c4c4" color="#c4c4c4" /></StyledTreeIcon>
          Favorites
        </StyledTreeRow>
        {["All Materials", "All Models", "All Prefabs"].map((name) => (
          <StyledTreeRow key={name}>
            <StyledTreeIndent $indent={11} />
            <StyledTreeIcon $w={16}><LensIcon /></StyledTreeIcon>
            {name}
          </StyledTreeRow>
        ))}
        <StyledTreeGap />
        <StyledTreeRow $bold>
          <StyledTreeIndent $indent={-3}><Caret /></StyledTreeIndent>
          <StyledTreeIcon><FolderIcon open /></StyledTreeIcon>
          Assets
        </StyledTreeRow>
        <StyledTreeRow>
          <StyledTreeIndent $indent={11}><Caret dir="right" /></StyledTreeIndent>
          <StyledTreeIcon $w={16}><FolderIcon /></StyledTreeIcon>
          Plugins
        </StyledTreeRow>
        <StyledTreeRow $selected>
          <StyledTreeIndent $indent={11} />
          <StyledTreeIcon $w={16}><FolderIcon /></StyledTreeIcon>
          Scenes
        </StyledTreeRow>
        <StyledTreeRow>
          <StyledTreeIndent $indent={11} />
          <StyledTreeIcon $w={16}><FolderIcon /></StyledTreeIcon>
          Scripts
        </StyledTreeRow>
        <StyledTreeRow>
          <StyledTreeIndent $indent={11}><Caret dir="right" /></StyledTreeIndent>
          <StyledTreeIcon $w={16}><FolderIcon /></StyledTreeIcon>
          Settings
        </StyledTreeRow>
        <StyledTreeRow>
          <StyledTreeIndent $indent={11}><Caret dir="right" /></StyledTreeIndent>
          <StyledTreeIcon $w={16}><FolderIcon /></StyledTreeIcon>
          TextMesh Pro
        </StyledTreeRow>
        <StyledTreeRow $bold>
          <StyledTreeIndent $indent={-3}><Caret dir="right" /></StyledTreeIndent>
          <StyledTreeIcon><FolderIcon /></StyledTreeIcon>
          Packages
        </StyledTreeRow>
      </StyledProjectTree>
      <StyledProjectFiles>
        <StyledBreadcrumb>
          Assets
          <svg width="6" height="9" viewBox="0 0 6 9" fill="none" stroke="#777" strokeWidth="1.200"><path d="m1 .5 4 4-4 4" /></svg>
          <StyledCrumbCurrent>Scenes</StyledCrumbCurrent>
        </StyledBreadcrumb>
        <StyledFileRow><UnityIcon />SampleScene</StyledFileRow>
      </StyledProjectFiles>
    </StyledProjectBody>
  </StyledPanel>
);

const Console = () => (
  <StyledPanel $w={718}>
    <PanelTabs width={87} pad={7} icon={<ListIcon />} label="Console" tools={<Dots />} />
    <StyledSubBar $h={20}>
      <StyledConsoleButton $w={56} $between>Clear<Caret color="#c4c4c4" /></StyledConsoleButton>
      <StyledConsoleButton $w={60}>Collapse</StyledConsoleButton>
      <StyledConsoleButton $w={74}>Error Pause</StyledConsoleButton>
      <StyledConsoleButton $w={50}>Editor<Caret color="#c4c4c4" /></StyledConsoleButton>
      <StyledSearchField $w={300} $ml={64}>
        <SmallLens />
      </StyledSearchField>
      <StyledCountButton $w={33} $ml={3}><StyledCountBadge $color="#888">!</StyledCountBadge>0</StyledCountButton>
      <StyledCountButton $w={42}><WarnIcon />34</StyledCountButton>
      <StyledCountButton $w={33}><StyledCountBadge $color="#bbb">!</StyledCountBadge>0</StyledCountButton>
    </StyledSubBar>
    <StyledTreeList />
  </StyledPanel>
);

const Inspector = () => (
  <StyledInspector>
    <PanelTabs width={93} pad={9} icon={<InfoIcon />} label="Inspector" tools={<><LockIcon /><Dots /></>} />
    <StyledInspectorMain>
      <StyledInspectorBody>
        <CheckRow label="Cull Transparent Mesh" checked />
        <StyledComponentHeader $mt={8} $h={22}>
          <StyledHeaderCaret><Caret dir="right" /></StyledHeaderCaret>
          <StyledHeaderIcon $w={20}><ImageIcon /></StyledHeaderIcon>
          <StyledCheckbox><CheckMark /></StyledCheckbox>
          <StyledHeaderTitle>Image</StyledHeaderTitle>
          <ComponentTools />
        </StyledComponentHeader>
        <StyledComponentHeader $soft $mb={4}>
          <StyledHeaderCaret><Caret /></StyledHeaderCaret>
          <StyledHeaderIcon $w={20}><ScrollRectIcon /></StyledHeaderIcon>
          <StyledCheckbox><CheckMark /></StyledCheckbox>
          <StyledHeaderTitle>Scroll Rect</StyledHeaderTitle>
          <ComponentTools />
        </StyledComponentHeader>
        <ObjectRow label="Content" icon={<RectDotsIcon />} value="Content (Rect Transform)" />
        <CheckRow label="Horizontal" />
        <CheckRow label="Vertical" checked />
        <SelectRow label="Movement Type" value="Elastic" />
        <ValueRow label="Elasticity" indent value="0.1" />
        <CheckRow label="Inertia" />
        <ValueRow label="Scroll Sensitivity" value="1" />
        <ObjectRow mt={8} label="Viewport" icon={<RectDotsIcon />} value="Viewport (Rect Transform)" />
        <ObjectRow label="Horizontal Scrollbar" icon={<ScrollbarIcon />} value="Scrollbar Horizontal (Scrollbar)" />
        <SelectRow label="Visibility" indent value="Auto Hide And Expand Viewport" />
        <ValueRow label="Spacing" indent value="-3" />
        <ObjectRow label="Vertical Scrollbar" icon={<ScrollbarIcon />} value="Scrollbar Vertical (Scrollbar)" />
        <SelectRow label="Visibility" indent value="Auto Hide And Expand Viewport" />
        <ValueRow label="Spacing" indent value="-3" />
        <StyledEventBox>
          <StyledEventHead>On Value Changed (Vector2)</StyledEventHead>
          <StyledEventBody>List is Empty</StyledEventBody>
        </StyledEventBox>
        <StyledEventFooter>+<StyledMinus>−</StyledMinus></StyledEventFooter>
        <StyledComponentHeader $soft $mb={3}>
          <StyledHeaderCaret><Caret /></StyledHeaderCaret>
          <StyledHeaderIcon $w={35}><LargeScriptIcon /></StyledHeaderIcon>
          <StyledHeaderTitle>Scroll Rect Update View (Script)</StyledHeaderTitle>
          <ComponentTools />
        </StyledComponentHeader>
        <ObjectRow disabled label="Script" icon={<ScriptIcon dim />} value="ScrollRectUpdateView" />
        <ObjectRow pencil label="Content Transform" icon={<RectDotsIcon />} value="Content (Rect Transform)" />
        <ObjectRow pencil label="Up Refresh Info" icon={<ScriptIcon />} value="UpLoadingTips (Scroll Refresh Info)" />
        <ObjectRow pencil label="Down Refresh Info" icon={<ScriptIcon />} value="DownLoadingTips (Scroll Refresh Info)" />
        <ValueRow disabled label="Refresh Number" value="100" />
        <ValueRow disabled label="Can Refresh Number" value="50" />
        <StyledMaterialCard>
          <StyledMaterialCaret><Caret dir="right" /></StyledMaterialCaret>
          <StyledMaterialSwatch><StyledMaterialWhite /></StyledMaterialSwatch>
          <StyledMaterialMain>
            <StyledMaterialTitle>
              Default UI Material (Material)
              <StyledMaterialTools><StyledHelpIcon>?</StyledHelpIcon><Dots /></StyledMaterialTools>
            </StyledMaterialTitle>
            <StyledShaderRow>
              Shader
              <StyledShaderSelect>UI/Default<Caret color="#999" /></StyledShaderSelect>
              <StyledEditButton>Edit...</StyledEditButton>
            </StyledShaderRow>
          </StyledMaterialMain>
        </StyledMaterialCard>
        <StyledThinRule />
        <StyledAddButton>Add Component</StyledAddButton>
      </StyledInspectorBody>
      <StyledScrollColumn>
        <StyledUpCaret />
        <StyledScrollThumb />
        <Caret color="#c4c4c4" />
      </StyledScrollColumn>
    </StyledInspectorMain>
    <StyledPreviewBar>
      <StyledPreviewSelect>Scroll View<Caret color="#c4c4c4" /></StyledPreviewSelect>
      <StyledDragLines />
      <StyledPreviewDots><Dots /></StyledPreviewDots>
    </StyledPreviewBar>
    <StyledPreviewStage>
      <StyledChecker>
        <StyledSpriteBlob />
        <StyledSliceLine $x={48} />
        <StyledSliceLine $x={105} />
      </StyledChecker>
    </StyledPreviewStage>
    <StyledRedBox />
  </StyledInspector>
);

const App = () => (
  <StyledPage>
    <GlobalStyle />
    <StyledTitleBar>
      <StyledTitleIcon>
        <svg width="14" height="14" viewBox="0 0 14 14">
          <circle cx="7" cy="7" r="7" fill="#222" />
          <path d="M7 2 11.500 4.500v5L7 12 2.500 9.500v-5z" fill="#eee" />
          <path d="M7 7V2.500M7 7 3 9.500M7 7l4 2.500" stroke="#222" strokeWidth="1.400" />
        </svg>
      </StyledTitleIcon>
      TestOnly - SampleScene - Windows, Mac, Linux - Unity 2021.3.22f1 Personal* &lt;DX11&gt;
      <StyledWindowButtons>
        <StyledWindowButton>
          <svg width="11" height="11" viewBox="0 0 11 11" stroke="#111"><path d="M0 5.500h10" /></svg>
        </StyledWindowButton>
        <StyledWindowButton>
          <svg width="11" height="11" viewBox="0 0 11 11" fill="none" stroke="#111"><path d="M.5 2.500h8v8h-8zM2.500 2.500v-2h8v8h-2" /></svg>
        </StyledWindowButton>
        <StyledWindowButton>
          <svg width="11" height="11" viewBox="0 0 11 11" stroke="#111"><path d="M.5.500l10 10M10.500.500l-10 10" /></svg>
        </StyledWindowButton>
      </StyledWindowButtons>
    </StyledTitleBar>
    <StyledMenuBar>
      {["File", "Edit", "Assets", "GameObject", "Component", "Tools", "Jobs", "Window", "Help"].map(
        (item) => <span key={item}>{item}</span>
      )}
    </StyledMenuBar>
    <StyledToolbar>
      <StyledToolbarLeft>
        <StyledTopButton $w={55} $spread>
          <svg width="13" height="13" viewBox="0 0 13 13"><circle cx="6.500" cy="6.500" r="6.500" fill="#bbb" /><circle cx="6.500" cy="5" r="2.500" fill="#373737" /><path d="M2.500 11c1-3 7-3 8 0z" fill="#373737" /></svg>
          <svg width="12" height="12" viewBox="0 0 12 12" fill="none" stroke="#999"><circle cx="6" cy="3" r="2" /><path d="M1 6h10M2 11l4-5 4 5" /></svg>
          <Caret color="#bbb" />
        </StyledTopButton>
        <StyledTopButton $w={31}>
          <svg width="15" height="10" viewBox="0 0 15 10" fill="#d0d0d0"><path d="M4 10a3 3 0 0 1-.5-6 4 4 0 0 1 7.500-1 3.500 3.500 0 0 1 0 7z" /></svg>
        </StyledTopButton>
        <StyledTopButton $w={30}>
          <svg width="12" height="14" viewBox="0 0 12 14" fill="none" stroke="#c4c4c4" strokeWidth="1.200"><path d="M6 .7 11 3.500v6L6 13 1 9.500v-6zM4 12V4.500h4v4H4" /></svg>
        </StyledTopButton>
      </StyledToolbarLeft>
      <StyledPlayGroup>
        <StyledTopButton $w={31}><Caret dir="right" color="#c4c4c4" /></StyledTopButton>
        <StyledTopButton $w={31}>
          <svg width="8" height="11" viewBox="0 0 8 11" fill="#c4c4c4"><path d="M0 0h3v11H0zM5 0h3v11H5z" /></svg>
        </StyledTopButton>
        <StyledTopButton $w={30}>
          <svg width="10" height="11" viewBox="0 0 10 11" fill="#c4c4c4"><path d="M0 0l7 5.500L0 11zM8 0h2v11H8z" /></svg>
        </StyledTopButton>
      </StyledPlayGroup>
      <StyledToolbarRight>
        <StyledTopButton $w={31}><History size={13} color="#c4c4c4" /></StyledTopButton>
        <StyledTopButton $w={30}><Search size={13} color="#c4c4c4" /></StyledTopButton>
        <StyledTopButton $w={78} $spread>Layers<Caret color="#c4c4c4" /></StyledTopButton>
        <StyledTopButton $w={78} $spread>Layout<Caret color="#c4c4c4" /></StyledTopButton>
      </StyledToolbarRight>
    </StyledToolbar>
    <StyledWorkspace>
      <StyledDockColumn>
        <StyledDockRow $h={559} $gap={2}>
          <Hierarchy />
          <Scene />
          <Game />
        </StyledDockRow>
        <StyledDockRow $h={265} $gap={2}>
          <Project />
          <Console />
        </StyledDockRow>
      </StyledDockColumn>
      <Inspector />
    </StyledWorkspace>
    <StyledWatermark>CSDN @念丶小宇</StyledWatermark>
  </StyledPage>
);

export default App;
